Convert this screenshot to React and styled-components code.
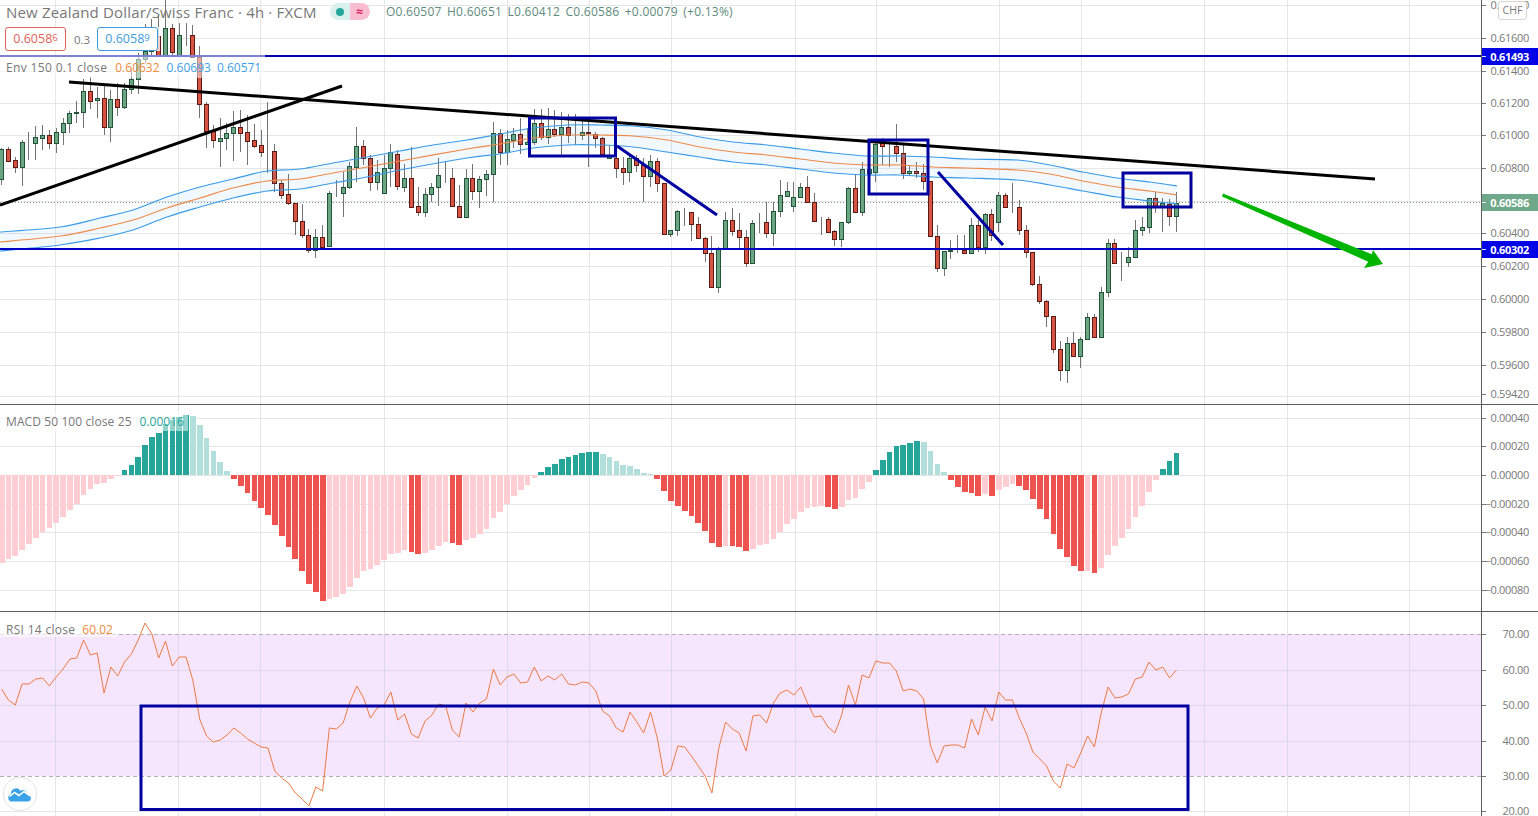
import React from "react";
import styled, { createGlobalStyle } from "styled-components";

const FONT = `"Open Sans", "Noto Sans", "Liberation Sans", sans-serif`;
const PLOT_W = 1481;
const STEP = 6.83;
const xAt = (i) => 1.6 + STEP * i;

/* type, bodyTop, bodyBottom, wickTop, wickBottom */
const CANDLES = `g149,179,148,185 r149,161,147,161 r160,167,157,173 g142,167,140,186 r142,142,132,160 g137,143,126,160 g135,138,125,150 r135,143,130,149 g132,143,128,153 g123,132,118,145
g113,123,111,133 g112,113,101,123 g91,112,79,128 r91,101,77,109 g98,100,87,118 r98,127,86,135 g99,127,90,142 r99,107,83,116 g89,107,83,109 g79,89,68,94
g59,79,53,94 g51,59,24,63 g45,51,19,55 r36,56,15,57 g28,56,0,57 r28,52,24,55 g35,56,23,57 r35,35,23,46 r35,57,25,58 r57,104,46,118
r104,131,102,148 r131,140,125,148 g138,141,118,167 g133,138,123,150 g127,133,111,161 r127,133,110,152 r132,141,115,165 r140,146,124,148 r145,152,130,157 r151,151,102,173
r151,183,144,192 r183,195,180,199 r194,203,174,205 r203,221,203,235 r221,235,204,238 r235,250,229,253 g237,250,229,258 r237,247,225,250 g193,246,191,247 r194,194,180,197
g187,193,172,217 g166,187,162,189 g146,167,127,182 r146,158,140,165 r158,182,155,191 g172,182,160,190 g168,193,155,193 g152,168,144,187 r154,186,150,190 g178,187,164,192
r178,207,147,207 r206,212,187,216 g194,212,188,217 g187,194,183,202 g175,187,158,206 r176,176,161,183 r178,206,168,206 r206,217,185,218 g178,217,169,217 r178,191,164,200
g179,191,176,208 g174,179,170,196 g133,174,122,202 r133,152,129,165 g139,152,130,165 g134,140,128,148 r134,144,118,154 g142,144,128,145 g123,142,109,145 r123,137,109,140
g129,137,108,144 r129,134,110,137 g127,134,112,157 r127,135,114,143 r135,135,114,145 g132,135,118,140 r132,133,120,167 r134,138,132,148 r138,154,137,157 g156,158,145,158
r158,168,155,178 r168,172,157,185 g158,172,153,182 r158,165,155,172 r165,176,158,202 g161,176,155,187 r161,183,158,192 r183,234,183,234 g230,234,230,237 g211,230,210,236
r212,212,208,226 r212,224,212,241 r224,238,217,239 r238,253,237,262 r253,287,236,288 g249,287,247,293 g220,249,212,250 r220,231,208,236 r230,237,213,248 r237,263,230,267
g223,263,220,263 g223,223,213,233 r222,233,202,238 g211,233,202,246 g195,211,180,217 g191,196,182,197 g197,206,182,212 g187,197,183,197 r187,202,176,203 r202,221,193,222
g220,220,217,235 r219,232,217,232 r231,239,230,246 g222,239,222,247 g188,222,187,224 r188,212,174,213 g169,212,162,216 g169,173,165,173 g144,172,142,182 r143,146,138,165
g146,146,143,167 r146,153,124,162 r153,173,144,179 g171,173,165,176 r171,173,162,178 r173,181,164,190 r181,236,181,236 r236,268,225,272 g251,268,251,276 g250,251,240,259
g250,250,235,253 r250,253,235,253 g225,253,218,253 r225,247,220,252 g214,247,213,254 r214,235,209,241 g195,222,192,232 r195,207,193,208 g206,206,183,213 r207,230,200,235
r230,252,225,258 r252,284,252,286 r284,301,276,304 r301,316,300,327 r316,349,316,353 r349,370,341,381 g343,370,337,383 r343,356,332,356 g339,356,337,368 g317,339,313,340
r317,337,314,338 g292,337,287,337 g243,292,239,297 r243,263,239,263 g262,262,252,281 g257,262,247,267 g230,257,220,257 g227,230,217,236 g198,227,198,233 r198,207,192,213
g203,207,198,232 r204,216,199,226 g203,216,192,232`
  .trim()
  .split(/\s+/)
  .map((s) => {
    const [a, b, c, d] = s.slice(1).split(",").map(Number);
    return { up: s[0] === "g", top: a, bot: b, wt: c, wb: d };
  });

const ENV_UPPER = [[0,232],[60,227],[100,218],[133,210],[167,197],[200,187],[233,179],[267,171],[300,169],[333,163],[367,157],[400,151],[433,145],[467,140],[500,134],[533,128],[567,125],[600,125],[633,126],[667,130],[700,137],[733,142],[767,145],[800,149],[833,153],[867,156],[900,156],[933,157],[967,159],[1017,160],[1050,165],[1083,172],[1117,178],[1150,182],[1177,186]];
const ENV_MID = [[0,242],[60,236],[100,228],[133,220],[167,208],[200,198],[233,188],[267,181],[300,179],[333,173],[367,167],[400,161],[467,149],[500,144],[533,138],[567,135],[600,135],[633,136],[667,140],[700,147],[733,152],[767,155],[800,159],[833,163],[867,165],[900,165],[933,167],[967,168],[1017,170],[1050,174],[1083,181],[1117,187],[1150,191],[1177,195]];
const ENV_LOWER = [[0,251],[60,245],[100,238],[133,230],[167,217],[200,207],[233,198],[267,191],[300,189],[333,183],[367,177],[400,170],[467,158],[500,154],[533,148],[567,145],[600,145],[633,147],[667,152],[700,157],[733,162],[767,165],[800,169],[833,173],[867,175],[900,175],[933,177],[967,178],[1017,180],[1050,185],[1083,191],[1117,197],[1150,201],[1177,204]];

const smooth = (pts) => {
  let d = `M${pts[0][0]} ${pts[0][1]}`;
  for (let i = 0; i < pts.length - 1; i++) {
    const p0 = pts[i - 1] || pts[i];
    const p1 = pts[i];
    const p2 = pts[i + 1];
    const p3 = pts[i + 2] || p2;
    const c1x = p1[0] + (p2[0] - p0[0]) / 6;
    const c1y = p1[1] + (p2[1] - p0[1]) / 6;
    const c2x = p2[0] - (p3[0] - p1[0]) / 6;
    const c2y = p2[1] - (p3[1] - p1[1]) / 6;
    d += ` C${c1x.toFixed(1)} ${c1y.toFixed(1)} ${c2x.toFixed(1)} ${c2y.toFixed(1)} ${p2[0]} ${p2[1]}`;
  }
  return d;
};

const BAR_COLORS = { g: "#26a69a", a: "#b2dfdb", d: "#ef5350", l: "#ffcdd2" };
const MACD_RUNS = [
  ["l", [563,559,556,550,544,538,532,528,523,517,510,504,495,489,484,483,479,476]],
  ["g", [470,465,457,445,437,433,424,420,417,415]],
  ["a", [416,425,438,451,462,471]],
  ["d", [479,486,493,501,508,515,525,536,547,559,571,584,592,601]],
  ["l", [599,597,594,587,578,571,569,565,560,554,553,550]],
  ["d", [552,554]],
  ["l", [553,550,546,542]],
  ["d", [543,545]],
  ["l", [540,538,534,529,518,512,504,496,490,485,478]],
  ["g", [472,467,464,459,457,455,453,452,452]],
  ["a", [454,457,461,465,466,469,473,474]],
  ["d", [479,491,501,506,511,516,523,531,543,547]],
  ["l", [546]],
  ["d", [546,547,551]],
  ["l", [549,545,544,539,532,524,519,512,508,507,506]],
  ["d", [507,509]],
  ["l", [507,500,498,489,482]],
  ["g", [470,460,452,446,445,443,441]],
  ["a", [442,451,464,472]],
  ["d", [480,487,492,493,496]],
  ["l", [494]],
  ["d", [496]],
  ["l", [490,487,484]],
  ["d", [486,490,499,509,519,534,549,557,566,571]],
  ["l", [571]],
  ["d", [573]],
  ["l", [568,555,546,538,529,517,506,492,480]],
  ["g", [469,461,453]],
];
const MACD_BARS = MACD_RUNS.flatMap(([c, ys]) => ys.map((y) => ({ c, y })));

const RSI = [689,700,705,684,684,679,678,686,677,669,659,658,640,655,653,693,667,676,662,654,640,623,634,658,641,666,657,657,680,719,736,742,740,735,728,733,739,743,747,748,771,778,783,793,799,806,787,791,728,729,723,702,686,698,718,708,705,692,720,714,734,738,721,715,704,706,730,737,703,712,703,699,669,685,677,674,683,682,667,681,676,680,674,684,685,682,683,691,711,716,728,732,712,722,733,712,738,776,770,746,747,756,766,776,793,748,722,729,733,751,716,715,723,703,693,690,695,687,703,717,716,727,733,715,685,705,675,678,661,663,663,671,691,689,691,699,746,763,746,745,745,748,719,735,707,721,692,700,700,718,733,752,759,766,781,788,764,768,753,736,747,713,687,698,697,694,679,677,662,670,667,678,670];

const V_GRID = [55,178,260,384,507,589,671,795,876,999,1081,1204,1287,1409];
const MAIN_GRID = [5,38,71,103,135,168,201,233,266,299,332,365,396];
const MACD_GRID = [418,446,475,504,532,561,590];
const RSI_GRID = [670,705,741];

const MAIN_LABELS = [["0.61800",5],["0.61600",38],["0.61400",71],["0.61200",103],["0.61000",135],["0.60800",168],["0.60400",233],["0.60200",266],["0.60000",299],["0.59800",332],["0.59600",365],["0.59420",394]];
const MACD_LABELS = [["0.00040",418],["0.00020",446],["0.00000",475],["−0.00020",504],["−0.00040",532],["−0.00060",561],["−0.00080",590]];
const RSI_LABELS = [["70.00",634],["60.00",670],["50.00",705],["40.00",741],["30.00",776],["20.00",811]];

const GlobalStyle = createGlobalStyle`
  html, body { margin: 0; padding: 0; background: #fff; overflow: hidden; }
  body { font-family: ${FONT}; }
`;

const Screen = styled.div`
  width: 1538px;
  height: 816px;
  display: flex;
  flex-direction: column;
  overflow: hidden;
  background: #fff;
`;
const Pane = styled.section`
  flex: 0 0 ${(p) => p.$height}px;
  display: flex;
  box-sizing: border-box;
  border-bottom: ${(p) => (p.$last ? "none" : "1px solid #5d5d5d")};
`;
const Plot = styled.div`
  flex: 0 0 ${PLOT_W}px;
  position: relative;
  overflow: hidden;
`;
const Chart = styled.svg`
  display: block;
  width: ${PLOT_W}px;
  height: 100%;
`;
const PriceAxis = styled.div`
  flex: 1;
  position: relative;
  box-sizing: border-box;
  border-left: 1px solid #5d5d5d;
  overflow: hidden;
`;
const AxisLabel = styled.div`
  position: absolute;
  left: 0;
  right: 9px;
  height: 10px;
  line-height: 10px;
  margin-top: -5px;
  font-size: 11px;
  letter-spacing: -0.3px;
  text-align: right;
  color: #787878;
  &::before {
    content: "";
    position: absolute;
    left: 0;
    top: 5px;
    width: 4px;
    height: 1px;
    background: #787878;
  }
`;
const AxisTag = styled.div`
  position: absolute;
  left: 0;
  right: 0;
  height: 17px;
  line-height: 17px;
  margin-top: -8px;
  padding-right: 9px;
  font-size: 11px;
  font-weight: 700;
  letter-spacing: -0.3px;
  text-align: right;
  color: #fff;
  background: ${(p) => p.$bg};
  &::before {
    content: "";
    position: absolute;
    left: 0;
    top: 8px;
    width: 4px;
    height: 1px;
    background: rgba(255, 255, 255, 0.85);
  }
`;
const CurrencyButton = styled.div`
  position: absolute;
  left: 16px;
  top: 1px;
  width: 29px;
  height: 19px;
  box-sizing: border-box;
  border: 1px solid #d6d6d6;
  border-radius: 3px;
  background: #fff;
  color: #787878;
  font-size: 10.5px;
  line-height: 17px;
  text-align: center;
`;
const MainLegend = styled.div`
  position: absolute;
  left: 0;
  top: 0;
  display: flex;
  flex-direction: column;
  align-items: flex-start;
`;
const TitleRow = styled.div`
  height: 23px;
  display: flex;
  align-items: center;
  padding-left: 6px;
  white-space: nowrap;
`;
const Title = styled.span`
  flex: 0 0 324px;
  font-size: 15px;
  letter-spacing: 0.17px;
  color: #787878;
`;
const StatusPill = styled.div`
  width: 40px;
  height: 17px;
  display: flex;
  border-radius: 9px;
  overflow: hidden;
  margin-right: 16px;
`;
const StatusHalf = styled.span`
  flex: 1;
  display: flex;
  align-items: center;
  justify-content: center;
  background: ${(p) => p.$bg};
  color: ${(p) => p.$fg};
  font-size: 12px;
  font-weight: 700;
  line-height: 1;
`;
const StatusDot = styled.i`
  width: 8px;
  height: 8px;
  border-radius: 50%;
  background: #26a69a;
`;
const Ohlc = styled.span`
  font-size: 12px;
  letter-spacing: 0.25px;
  color: #5e8a7c;
  word-spacing: 2px;
`;
const QuoteRow = styled.div`
  margin-top: 4px;
  height: 24px;
  width: 160px;
  display: flex;
  align-items: center;
  background: rgba(255, 255, 255, 0.72);
`;
const QuoteBox = styled.div`
  box-sizing: border-box;
  margin-left: ${(p) => p.$offset}px;
  width: ${(p) => p.$width}px;
  height: 24px;
  border: 1px solid ${(p) => p.$color};
  border-radius: 3px;
  background: #fff;
  color: ${(p) => p.$color};
  font-size: 12.5px;
  line-height: 22px;
  text-align: center;
  sup {
    font-size: 9.5px;
    line-height: 0;
    vertical-align: 2px;
  }
`;
const Spread = styled.span`
  margin-left: 8px;
  width: 23px;
  font-size: 11.5px;
  color: #787878;
`;
const StudyRow = styled.div`
  display: flex;
  align-items: center;
  box-sizing: border-box;
  white-space: nowrap;
  height: ${(p) => p.$height || 17}px;
  padding: ${(p) => p.$padTop || 0}px 4px 0 6px;
  margin-top: ${(p) => p.$gap || 0}px;
  background: rgba(255, 255, 255, ${(p) => p.$veil});
  font-size: 12px;
  color: #787878;
`;
const StudyName = styled.span`
  letter-spacing: ${(p) => p.$tracking}px;
`;
const StudyValue = styled.span`
  margin-left: ${(p) => p.$gap}px;
  color: ${(p) => p.$color};
`;
const PaneLegend = styled.div`
  position: absolute;
  left: 0;
  top: ${(p) => p.$top}px;
`;
const LogoBadge = styled.div`
  position: absolute;
  left: 3px;
  top: 165px;
  width: 34px;
  height: 34px;
  box-sizing: border-box;
  border: 1px solid #e3e3e3;
  border-radius: 50%;
  background: #fff;
  display: flex;
  align-items: center;
  justify-content: center;
`;

const GridLines = ({ top, bottom, rows, color = "#e6e6e6" }) => (
  <g stroke={color} strokeWidth="1" shapeRendering="crispEdges">
    {V_GRID.map((x) => <line key={x} x1={x + 0.5} x2={x + 0.5} y1={top} y2={bottom} />)}
    {rows.map((y) => <line key={y} x1="0" x2={PLOT_W} y1={y + 0.5} y2={y + 0.5} />)}
  </g>
);

const Candle = ({ c, i }) => {
  const cx = Math.floor(xAt(i)) + 0.5;
  const fill = c.up ? "#6ba583" : "#d75442";
  const edge = c.up ? "#225437" : "#5b1a13";
  return (
    <g shapeRendering="crispEdges">
      <line x1={cx} x2={cx} y1={c.wt} y2={c.wb} stroke="#737375" />
      <rect x={cx - 2} y={c.top + 0.5} width="4" height={Math.max(c.bot - c.top, 0)} fill={fill} stroke={edge} />
    </g>
  );
};

const DRAW = "#0000a0";

const MainChart = () => (
  <Chart viewBox="0 0 1481 404">
    <GridLines top={0} bottom={404} rows={MAIN_GRID} />
    <line x1="0" x2={PLOT_W} y1="202.5" y2="202.5" stroke="#7f9a8c" strokeDasharray="1 2" shapeRendering="crispEdges" />
    {CANDLES.map((c, i) => <Candle key={i} c={c} i={i} />)}
    <path
      d={`${smooth(ENV_UPPER)} L${[...ENV_LOWER].reverse().map((p) => p.join(" ")).join(" L")} Z`}
      fill="rgba(33,150,243,0.06)"
    />
    <path d={smooth(ENV_UPPER)} fill="none" stroke="#3a9ce6" strokeWidth="1.2" />
    <path d={smooth(ENV_LOWER)} fill="none" stroke="#3a9ce6" strokeWidth="1.2" />
    <path d={smooth(ENV_MID)} fill="none" stroke="#ef8a4a" strokeWidth="1.2" />
    <line x1="0" x2={PLOT_W} y1="56" y2="56" stroke="#0000a8" strokeWidth="2" />
    <line x1="0" x2={PLOT_W} y1="249" y2="249" stroke="#0000c4" strokeWidth="2" />
    <line x1="69" y1="82" x2="1375" y2="179" stroke="#000" strokeWidth="3" />
    <line x1="0" y1="205" x2="342" y2="86" stroke="#000" strokeWidth="3" />
    <g fill="none" stroke={DRAW} strokeWidth="3">
      <rect x="529.5" y="118" width="86" height="38" />
      <rect x="869" y="140" width="59" height="54" />
      <rect x="1123" y="173" width="68" height="34" />
      <line x1="617" y1="146" x2="717" y2="215" />
      <line x1="938" y1="172" x2="1003" y2="245" />
    </g>
    <polygon
      points="1223,193.5 1371.8,254.3 1373,250 1383,264 1364,268 1368.2,261.7 1222,196.5"
      fill="#00b400"
    />
  </Chart>
);

const MacdChart = () => (
  <Chart viewBox="0 405 1481 206">
    <GridLines top={405} bottom={611} rows={MACD_GRID} />
    <g shapeRendering="crispEdges">
      {MACD_BARS.map((b, i) => {
        const x = xAt(i) - 2.8;
        const top = Math.min(b.y, 475);
        return <rect key={i} x={x} y={top} width="5.7" height={Math.max(Math.abs(b.y - 475), 1)} fill={BAR_COLORS[b.c]} />;
      })}
    </g>
  </Chart>
);

const RsiChart = () => (
  <Chart viewBox="0 612 1481 204">
    <rect x="0" y="634" width={PLOT_W} height="142" fill="#f5e6fe" />
    <GridLines top={612} bottom={634} rows={[811]} />
    <GridLines top={776} bottom={816} rows={[]} />
    <GridLines top={634} bottom={776} rows={RSI_GRID} color="#e0d6ea" />
    <g stroke="#b4b0b8" strokeDasharray="4 3" shapeRendering="crispEdges">
      <line x1="0" x2={PLOT_W} y1="634.5" y2="634.5" />
      <line x1="0" x2={PLOT_W} y1="776.5" y2="776.5" />
    </g>
    <polyline
      points={RSI.map((y, i) => `${xAt(i).toFixed(1)},${y}`).join(" ")}
      fill="none"
      stroke="#ec7a45"
      strokeWidth="1"
    />
    <rect x="141" y="706" width="1047" height="103.5" fill="none" stroke={DRAW} strokeWidth="3" />
  </Chart>
);

const Axis = ({ labels, top, children }) => (
  <PriceAxis>
    {labels.map(([t, y]) => <AxisLabel key={t} style={{ top: y - top }}>{t}</AxisLabel>)}
    {children}
  </PriceAxis>
);

export default function App() {
  return (
    <Screen>
      <GlobalStyle />
      <Pane $height={405}>
        <Plot>
          <MainChart />
          <MainLegend>
            <TitleRow>
              <Title>New Zealand Dollar/Swiss Franc · 4h · FXCM</Title>
              <StatusPill>
                <StatusHalf $bg="#d9f0ec" $fg="#26a69a"><StatusDot /></StatusHalf>
                <StatusHalf $bg="#f9bdd2" $fg="#e91e63">≈</StatusHalf>
              </StatusPill>
              <Ohlc>O0.60507 H0.60651 L0.60412 C0.60586 +0.00079 (+0.13%)</Ohlc>
            </TitleRow>
            <QuoteRow>
              <QuoteBox $offset={5} $width={61} $color="#e0625a">0.6058<sup>6</sup></QuoteBox>
              <Spread>0.3</Spread>
              <QuoteBox $offset={0} $width={61} $color="#3d9ddb">0.6058<sup>9</sup></QuoteBox>
            </QuoteRow>
            <StudyRow $height={23} $padTop={1} $gap={4} $veil={0.5}>
              <StudyName $tracking={0.35}>Env 150 0.1 close</StudyName>
              <StudyValue $gap={8} $color="#f08a3c">0.60632</StudyValue>
              <StudyValue $gap={7} $color="#3f9fe6">0.60693</StudyValue>
              <StudyValue $gap={6} $color="#3f9fe6">0.60571</StudyValue>
            </StudyRow>
          </MainLegend>
        </Plot>
        <Axis labels={MAIN_LABELS} top={0}>
          <CurrencyButton>CHF</CurrencyButton>
          <AxisTag $bg="#0000e6" style={{ top: 56 }}>0.61493</AxisTag>
          <AxisTag $bg="#6fa88a" style={{ top: 202 }}>0.60586</AxisTag>
          <AxisTag $bg="#0000e6" style={{ top: 249 }}>0.60302</AxisTag>
        </Axis>
      </Pane>
      <Pane $height={207}>
        <Plot>
          <MacdChart />
          <PaneLegend $top={6}>
            <StudyRow $height={20} $veil={0.5}>
              <StudyName $tracking={0.1}>MACD 50 100 close 25</StudyName>
              <StudyValue $gap={8} $color="#26a69a">0.00016</StudyValue>
            </StudyRow>
          </PaneLegend>
        </Plot>
        <Axis labels={MACD_LABELS} top={405} />
      </Pane>
      <Pane $height={204} $last>
        <Plot>
          <RsiChart />
          <PaneLegend $top={9}>
            <StudyRow $height={16} $veil={0.6}>
              <StudyName $tracking={0.3}>RSI 14 close</StudyName>
              <StudyValue $gap={7} $color="#f08a3c">60.02</StudyValue>
            </StudyRow>
          </PaneLegend>
          <LogoBadge>
            <svg width="24" height="16" viewBox="0 0 24 16">
              <path d="M4 15.5a3.7 3.7 0 0 1-.9-7.3 5 5 0 0 1 9.2-3.4 4.4 4.4 0 0 1 6.9 3.4 3.7 3.7 0 0 1 .8 7.3Z" fill="#3aa3e8" />
              <path d="M1.5 10.5 6.5 6.5 11 9.5 16 5.5 22.5 10" fill="none" stroke="#fff" strokeWidth="1.6" />
            </svg>
          </LogoBadge>
        </Plot>
        <Axis labels={RSI_LABELS} top={612} />
      </Pane>
    </Screen>
  );
}
